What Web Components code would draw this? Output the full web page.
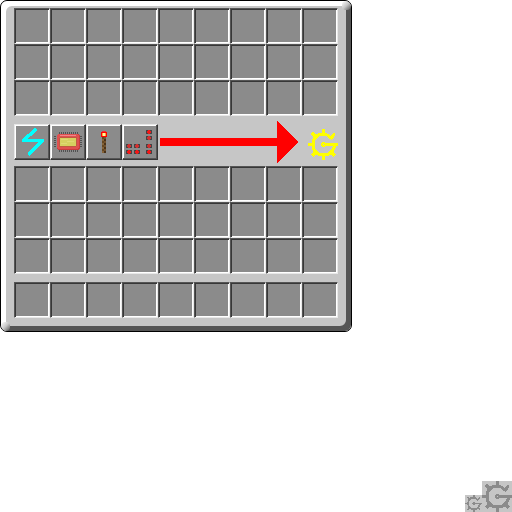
<!DOCTYPE html>
<html lang="en"><head><meta charset="utf-8"><title>Machine inventory</title>
<style>
body{margin:0;min-height:100vh;background:#fff;font-family:"Liberation Sans",sans-serif;position:relative}
</style></head><body>
<crafting-panel></crafting-panel><brand-marks></brand-marks>
<script>
const gearShape = `<g fill="none" stroke="currentColor" stroke-width="3"><path d="M25 7L23 9L19 6L15 5L10 6L6 10L5 15L6 21L10 25L15 26L21 25L25 21L27 16"/><path d="M15 15.500H30"/><path d="M15.500 5V0M8 8L4 4M5 15.500H0M8 23L4 27M15.500 26v5M23 23l4 4M22 9l5-4"/></g><circle cx="15.500" cy="15.500" r="2.500" fill="currentColor"/><rect x="15" y="15" width="1" height="1" fill="var(--hub,#c6c6c6)"/>`;
class ItemSlot extends HTMLElement{
 constructor(){super();this.attachShadow({mode:'open'}).innerHTML=`<style>
 :host{display:block;width:36px;height:36px}
 button{display:grid;place-items:center;box-sizing:border-box;width:100%;height:100%;margin:0;padding:1px;background:#8b8b8b;border:1px solid;border-color:#555 #e8e8e8 #e8e8e8 #555;box-shadow:inset 1px 1px #373737,inset -1px -1px #fff}
 :host([raised]) button{border-color:#e8e8e8 #373737 #373737 #e8e8e8;box-shadow:inset -1px -1px #555,inset 1px 1px #fff}
 </style><button type="button"><slot></slot></button>`;
 this.shadowRoot.querySelector('button').setAttribute('aria-label',this.getAttribute('label')||'Empty slot')}}
customElements.define('item-slot',ItemSlot);
class SlotGrid extends HTMLElement{
 constructor(){super();const n=9*Number(this.getAttribute('rows'));this.attachShadow({mode:'open'}).innerHTML=`<style>:host{display:grid;grid-template-columns:repeat(9,36px)}</style>`+'<item-slot></item-slot>'.repeat(n)}}
customElements.define('slot-grid',SlotGrid);
class PixelIcon extends HTMLElement{
 constructor(){super();const r=(x,y,w,h,c)=>`<rect x="${x}" y="${y}" width="${w}" height="${h}" fill="${c}"/>`;let s='';const k=this.getAttribute('kind');
 if(k==='bolt')s='<path d="M19 4L7.500 14.500H26.500L13.500 28" fill="none" stroke="#0ff" stroke-width="3.500" stroke-linecap="round" stroke-linejoin="round"/>';
 if(k==='chip'){for(let i=0;i<10;i++)s+=r(7+i*2,6,1,2,'#505050')+r(7+i*2,24,1,2,'#505050');for(let i=0;i<6;i++)s+=r(2,10+i*2,2,1,'#505050')+r(28,10+i*2,2,1,'#505050');
 s+='<rect x="5" y="8" width="23" height="16" rx="3" fill="#c83c3c"/><rect x="5" y="8" width="22" height="15" rx="3" fill="#e05050"/><path d="M8 9.500h16" stroke="#f08888"/><rect x="7" y="11" width="18" height="10" rx="2" fill="#c05a40"/><rect x="8" y="12" width="16" height="8" rx="1" fill="#d6d060"/><path d="M9 13.500h7M15 15.500h7M9 17.500h6" stroke="#e0d874"/>'}
 if(k==='torch'){s+=r(13,6,6,5,'#f00')+r(14,5,4,1,'#e33')+r(14,7,4,3,'#fa3')+r(15,7,2,3,'#fff5a0');for(let i=0;i<8;i++)s+=r(14,11+i*2,2,2,i%2?'#856338':'#654722')+r(16,11+i*2,2,2,i%2?'#4a3218':'#73522b')}
 if(k==='signal'){for(const [x,y] of [[22,4],[22,10],[2,18],[10,18],[22,18],[2,24],[10,24],[22,24]]){const c=y===24||y===4?'#f01818':'#d03030';s+=r(x,y,6,4,'#444')+r(x+1,y+1,4,2,c)+r(x+2,y,2,4,c)}}
 if(k==='gear')s=gearShape;
 this.attachShadow({mode:'open'}).innerHTML=`<style>:host{display:block;width:32px;height:32px}svg{display:block;width:100%;height:100%}</style><svg viewBox="0 0 ${k==='gear'?'30 31':'32 32'}" shape-rendering="crispEdges" aria-hidden="true">${s}</svg>`}}
customElements.define('pixel-icon',PixelIcon);
class CraftingPanel extends HTMLElement{
 constructor(){super();this.attachShadow({mode:'open'}).innerHTML=`<style>
 :host{display:block;width:fit-content;box-sizing:border-box;background:#c6c6c6;border:1px solid #000;border-radius:7px;overflow:hidden}
 main{position:relative;padding:7px 13px 13px;border-radius:6px;box-shadow:inset 5px 5px #fff,inset -5px -5px #555}
 main::before,main::after{content:"";position:absolute;width:9px;height:9px;border-radius:4px;background:linear-gradient(135deg,#fff,#c6c6c6 50%,#555)}
 main::before{right:0;top:0}main::after{left:0;bottom:0}
 .process{display:flex;align-items:center;margin:8px 0 6px}.arrow{width:140px;height:44px;margin:-4px 8px -4px 2px}.process>pixel-icon{width:30px;height:31px;margin-top:5px;color:#ff0}
 slot-grid+slot-grid{margin-top:8px}
 </style><main><slot-grid rows="3"></slot-grid><section class="process">
 <item-slot raised label="Power"><pixel-icon kind="bolt"></pixel-icon></item-slot><item-slot raised label="Circuit"><pixel-icon kind="chip"></pixel-icon></item-slot><item-slot raised label="Torch"><pixel-icon kind="torch"></pixel-icon></item-slot><item-slot raised label="Signal"><pixel-icon kind="signal"></pixel-icon></item-slot>
 <svg class="arrow" viewBox="0 0 140 44" shape-rendering="crispEdges" aria-hidden="true"><path d="M0 18H117V1L138 22 117 43V26H0Z" fill="#f00"/></svg><pixel-icon kind="gear"></pixel-icon></section><slot-grid rows="3"></slot-grid><slot-grid rows="1"></slot-grid></main>`}}
customElements.define('crafting-panel',CraftingPanel);
class BrandMarks extends HTMLElement{
 constructor(){super();this.attachShadow({mode:'open'}).innerHTML=`<style>:host{position:absolute;right:0;bottom:0;display:flex;align-items:end;color:#8b8b8b}pixel-icon{background:#c6c6c6}.small{width:17px;height:17px}.large{width:30px;height:31px}</style><pixel-icon class="small" kind="gear"></pixel-icon><pixel-icon class="large" kind="gear"></pixel-icon>`}}
customElements.define('brand-marks',BrandMarks);
</script></body></html>
